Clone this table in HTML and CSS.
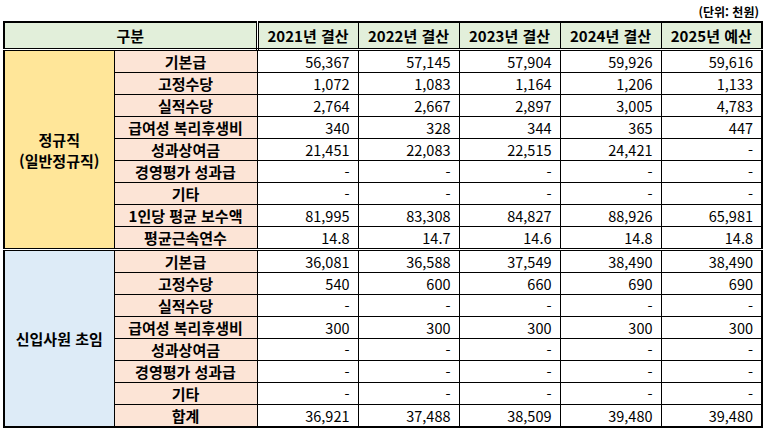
FILE: index.html
```html
<!DOCTYPE html>
<html lang="ko">
<head>
<meta charset="utf-8">
<link rel="stylesheet" href="styles.css">
</head>
<body>
<div class="unit">(단위: 천원)</div>
<table class="tbl">
<colgroup>
<col class="c1"><col class="c2"><col class="cn"><col class="cn"><col class="cn"><col class="cn"><col class="cn">
</colgroup>
<thead>
<tr class="head">
<th colspan="2" class="gubun">구분</th>
<th>2021년 결산</th><th>2022년 결산</th><th>2023년 결산</th><th>2024년 결산</th><th>2025년 예산</th>
</tr>
</thead>
<tbody class="g1">
<tr><th rowspan="9" class="grp yellow">정규직<br>(일반정규직)</th><th class="lab">기본급</th><td>56,367</td><td>57,145</td><td>57,904</td><td>59,926</td><td>59,616</td></tr>
<tr><th class="lab">고정수당</th><td>1,072</td><td>1,083</td><td>1,164</td><td>1,206</td><td>1,133</td></tr>
<tr><th class="lab">실적수당</th><td>2,764</td><td>2,667</td><td>2,897</td><td>3,005</td><td>4,783</td></tr>
<tr><th class="lab">급여성 복리후생비</th><td>340</td><td>328</td><td>344</td><td>365</td><td>447</td></tr>
<tr><th class="lab">성과상여금</th><td>21,451</td><td>22,083</td><td>22,515</td><td>24,421</td><td>-</td></tr>
<tr><th class="lab">경영평가 성과급</th><td>-</td><td>-</td><td>-</td><td>-</td><td>-</td></tr>
<tr><th class="lab">기타</th><td>-</td><td>-</td><td>-</td><td>-</td><td>-</td></tr>
<tr><th class="lab">1인당 평균 보수액</th><td>81,995</td><td>83,308</td><td>84,827</td><td>88,926</td><td>65,981</td></tr>
<tr class="last"><th class="lab">평균근속연수</th><td>14.8</td><td>14.7</td><td>14.6</td><td>14.8</td><td>14.8</td></tr>
</tbody>
<tbody class="g2">
<tr class="first"><th rowspan="8" class="grp blue">신입사원 초임</th><th class="lab">기본급</th><td>36,081</td><td>36,588</td><td>37,549</td><td>38,490</td><td>38,490</td></tr>
<tr><th class="lab">고정수당</th><td>540</td><td>600</td><td>660</td><td>690</td><td>690</td></tr>
<tr><th class="lab">실적수당</th><td>-</td><td>-</td><td>-</td><td>-</td><td>-</td></tr>
<tr><th class="lab">급여성 복리후생비</th><td>300</td><td>300</td><td>300</td><td>300</td><td>300</td></tr>
<tr><th class="lab">성과상여금</th><td>-</td><td>-</td><td>-</td><td>-</td><td>-</td></tr>
<tr><th class="lab">경영평가 성과급</th><td>-</td><td>-</td><td>-</td><td>-</td><td>-</td></tr>
<tr><th class="lab">기타</th><td>-</td><td>-</td><td>-</td><td>-</td><td>-</td></tr>
<tr><th class="lab">합계</th><td>36,921</td><td>37,488</td><td>38,509</td><td>39,480</td><td>39,480</td></tr>
</tbody>
</table>
</body>
</html>
```

FILE: styles.css
```css
html, body {
  margin: 0;
  padding: 0;
  background: #ffffff;
}
body {
  font-family: "Noto Sans CJK KR", "Noto Sans", sans-serif;
  color: #000;
}
.unit {
  height: 21px;
  line-height: 24px;
  font-size: 12px;
  font-weight: bold;
  text-align: right;
  padding-right: 8px;
  box-sizing: border-box;
}
.tbl {
  margin-left: 3px;
  border-collapse: collapse;
  table-layout: fixed;
  width: 759px;
  border: 2px solid #000;
}
.c1 { width: 110px; }
.c2 { width: 143px; }
.cn { width: 101px; }
.tbl th, .tbl td {
  border: 1px solid #000;
  padding: 0;
  height: 21px;
  line-height: 21px;
  font-size: 15px;
  white-space: nowrap;
  overflow: hidden;
}
.tbl td {
  text-align: right;
  padding-right: 8px;
  font-size: 14.5px;
  font-weight: normal;
}
.head th {
  background: #E2EFDA;
  font-weight: bold;
  height: 25px;
  border-top: 2px solid #000;
  border-bottom: 3px double #000;
  text-align: center;
}
.head th.gubun {
  border-right: 3px double #000;
  border-left: 2px solid #000;
}
.lab {
  background: #FCE4D6;
  font-weight: bold;
  text-align: center;
}
.grp {
  font-weight: bold;
  text-align: center;
  line-height: 24px;
  border-left: 2px solid #000;
}
.yellow { background: #FFE699; }
.blue { background: #DDEBF7; }
.g1 tr.last th, .g1 tr.last td {
  border-bottom: 3px double #000;
}
.g1 .grp {
  border-bottom: 3px double #000;
}
.g2 tr:last-child th, .g2 tr:last-child td {
  border-bottom: 2px solid #000;
}
.g2 .grp {
  border-bottom: 2px solid #000;
}
.tbl tr > :last-child {
  border-right: 2px solid #000;
}
```
